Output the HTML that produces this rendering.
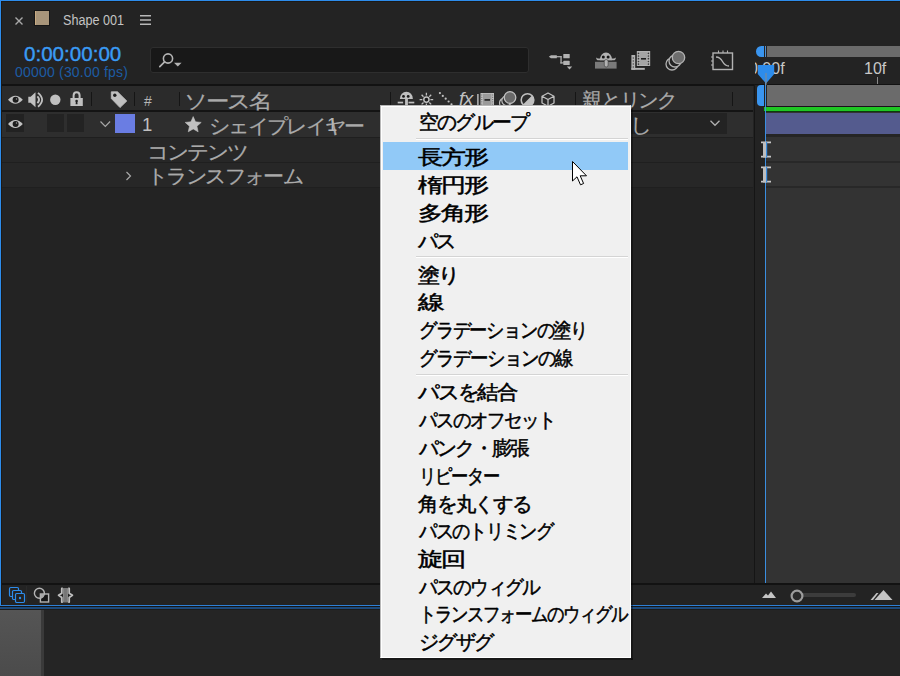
<!DOCTYPE html>
<html><head><meta charset="utf-8"><title>Shape 001</title>
<style>
*{margin:0;padding:0;box-sizing:border-box}
html,body{width:900px;height:676px;overflow:hidden;background:#232323;font-family:"Liberation Sans",sans-serif;position:relative}
.a{position:absolute;display:block}
.t{position:absolute;white-space:nowrap}
</style></head>
<body>
<div class="a" style="left:0px;top:0px;width:900px;height:609px;background:#232323;"></div>
<div class="a" style="left:0px;top:0px;width:900px;height:1px;background:#2d8ceb;"></div>
<div class="a" style="left:0px;top:0px;width:1px;height:607px;background:#2d8ceb;"></div>
<div class="a" style="left:1px;top:1px;width:899px;height:1px;background:#1b1917;"></div>
<div class="a" style="left:1px;top:1px;width:1px;height:606px;background:#1b1917;"></div>
<svg class="a" style="left:14px;top:16px;" width="10" height="10" viewBox="0 0 10 10"><path d="M1.5 1.5L8.5 8.5M8.5 1.5L1.5 8.5" stroke="#a9a9a9" stroke-width="1.4" fill="none"/></svg>
<div class="a" style="left:34px;top:10px;width:16px;height:16px;background:#161616;"></div>
<div class="a" style="left:35px;top:11px;width:14px;height:14px;background:#a8957a;"></div>
<div class="a" style="left:35px;top:11px;width:1px;height:14px;background:#c9ab82;"></div>
<div class="t" style="left:63px;top:13px;font-size:14px;line-height:14px;color:#c4c4c4;transform:scaleX(0.9);transform-origin:0 0">Shape 001</div>
<svg class="a" style="left:139px;top:14px;" width="13" height="12" viewBox="0 0 13 12"><path d="M1 1.75H12M1 6H12M1 10.25H12" stroke="#b8b8b8" stroke-width="1.5" fill="none"/></svg>
<div class="t" style="left:23.5px;top:43px;font-size:21px;line-height:21px;color:#3a9bf4;-webkit-text-stroke:0.4px #3a9bf4;transform:scaleX(0.98);transform-origin:0 0">0:00:00:00</div>
<div class="t" style="left:15px;top:65px;font-size:14px;line-height:14px;color:#1d5ca3;letter-spacing:0.2px">00000 (30.00 fps)</div>
<div class="a" style="left:150px;top:47.3px;width:379px;height:26px;background:#181818;border:1px solid #2e2e2e;border-radius:3px"></div>
<svg class="a" style="left:156px;top:50px;" width="30" height="20" viewBox="0 0 30 20"><circle cx="12" cy="8.5" r="4.6" stroke="#b4b4b4" stroke-width="1.6" fill="none"/><path d="M8.6 11.9L3.8 16.7" stroke="#b4b4b4" stroke-width="1.7" stroke-linecap="round"/><path d="M18 12.7H25.6L21.8 16.5Z" fill="#b4b4b4"/></svg>
<svg class="a" style="left:548px;top:52px;" width="26" height="20" viewBox="0 0 26 20"><path d="M0.8 4.7L3 3.2H8.8V6.2H3Z" fill="#b2b2b2"/><rect x="8" y="4.1" width="5.6" height="1.2" fill="#b2b2b2"/><rect x="12.4" y="4.1" width="1.3" height="7.4" fill="#b2b2b2"/><rect x="12.4" y="10.3" width="3.5" height="1.2" fill="#b2b2b2"/><rect x="15.3" y="2" width="6.4" height="4.3" rx="0.6" fill="#b2b2b2"/><rect x="15.3" y="8.8" width="6.4" height="4.2" rx="0.6" fill="#b2b2b2"/><path d="M18.8 14.6H24.2L21.5 17.6Z" fill="#b2b2b2"/></svg>
<svg class="a" style="left:594px;top:50px;" width="24" height="20" viewBox="0 0 24 20"><rect x="1" y="11.8" width="21.6" height="6.8" fill="#7a7a7a"/><path d="M5.8 10.2A6.2 7.8 0 0 1 18.2 10.2Z" fill="#b2b2b2"/><path d="M2.2 7.4Q2.2 10.3 4.6 10.3H19.4Q21.8 10.3 21.8 7.4L20.2 8.6H3.8Z" fill="#b2b2b2"/><circle cx="9.3" cy="7" r="1.5" fill="#151515"/><circle cx="14.1" cy="7" r="1.5" fill="#151515"/><rect x="10.3" y="9.5" width="3.8" height="7.5" rx="1.9" fill="#b2b2b2" stroke="#3a3a3a" stroke-width="0.6"/></svg>
<svg class="a" style="left:629px;top:49px;" width="24" height="23" viewBox="0 0 24 23"><rect x="2.4" y="6" width="3.8" height="14.8" fill="#b2b2b2"/><rect x="2.4" y="18.9" width="13.4" height="1.9" fill="#b2b2b2"/><circle cx="4.3" cy="9" r="0.7" fill="#444"/><circle cx="4.3" cy="12" r="0.7" fill="#444"/><circle cx="4.3" cy="15" r="0.7" fill="#444"/><circle cx="4.3" cy="18" r="0.7" fill="#444"/><rect x="7.3" y="1.5" width="14.4" height="16" fill="#1e1e1e"/><rect x="7.8" y="2" width="13.4" height="15" fill="#b2b2b2"/><rect x="11" y="3" width="7" height="13" fill="#a4a4a4"/><rect x="12" y="9" width="5" height="1.6" fill="#1e1e1e"/><circle cx="9.5" cy="4.3" r="0.85" fill="#3a3a3a"/><circle cx="9.5" cy="7" r="0.85" fill="#3a3a3a"/><circle cx="9.5" cy="9.7" r="0.85" fill="#3a3a3a"/><circle cx="9.5" cy="12.5" r="0.85" fill="#3a3a3a"/><circle cx="9.5" cy="15.1" r="0.85" fill="#3a3a3a"/><circle cx="19.4" cy="4.3" r="0.85" fill="#3a3a3a"/><circle cx="19.4" cy="7" r="0.85" fill="#3a3a3a"/><circle cx="19.4" cy="9.7" r="0.85" fill="#3a3a3a"/><circle cx="19.4" cy="12.5" r="0.85" fill="#3a3a3a"/><circle cx="19.4" cy="15.1" r="0.85" fill="#3a3a3a"/></svg>
<svg class="a" style="left:664px;top:49px;" width="25" height="23" viewBox="0 0 25 23"><circle cx="8" cy="15" r="6" fill="none" stroke="#b2b2b2" stroke-width="1.3"/><circle cx="11" cy="12" r="6" fill="#232323" stroke="#b2b2b2" stroke-width="1.3"/><circle cx="14.5" cy="8.5" r="6.2" fill="#6e6e6e" stroke="#b2b2b2" stroke-width="1.3"/></svg>
<svg class="a" style="left:709px;top:48px;" width="26" height="24" viewBox="0 0 26 24"><rect x="4" y="5" width="19.5" height="16.5" fill="none" stroke="#b2b2b2" stroke-width="1.4"/><path d="M7 9Q11 9 13.5 13.5Q16 18 20 18" fill="none" stroke="#b2b2b2" stroke-width="1.4"/><path d="M9.5 2.5V5M14 2.5V5M18.5 2.5V5M2 9H4M2 13H4M2 17H4" stroke="#b2b2b2" stroke-width="1.1"/></svg>
<div class="a" style="left:2px;top:84px;width:898px;height:2px;background:#121212;"></div>
<div class="a" style="left:2px;top:86px;width:751px;height:24px;background:#2b2b2b;"></div>
<div class="a" style="left:2px;top:110px;width:751px;height:2px;background:#141414;"></div>
<div class="a" style="left:2px;top:112px;width:751px;height:25px;background:#2e2e2e;"></div>
<div class="a" style="left:2px;top:137px;width:751px;height:1px;background:#1f1f1f;"></div>
<div class="a" style="left:2px;top:138px;width:751px;height:24px;background:#272727;"></div>
<div class="a" style="left:2px;top:162px;width:751px;height:1px;background:#1f1f1f;"></div>
<div class="a" style="left:2px;top:163px;width:751px;height:24px;background:#272727;"></div>
<div class="a" style="left:2px;top:187px;width:751px;height:1px;background:#1f1f1f;"></div>
<svg class="a" style="left:7px;top:92px;" width="18" height="16" viewBox="0 0 18 16"><path d="M1 7.8Q8.4 -0.2 15.8 7.8Q8.4 15.8 1 7.8Z" fill="#c0c0c0"/><circle cx="8.6" cy="7.8" r="3" fill="#1c1c1c"/><circle cx="9.5" cy="6.9" r="0.75" fill="#9a9a9a"/></svg>
<svg class="a" style="left:27px;top:91px;" width="19" height="18" viewBox="0 0 19 18"><path d="M1.3 5.8H3.6L8.5 1.3V16.3L3.6 11.8H1.3Z" fill="#c0c0c0"/><path d="M10.4 5.4Q13.6 8.8 10.4 12.2" stroke="#c0c0c0" stroke-width="1.9" fill="none"/><path d="M11 1.9Q19.2 8.8 11 15.7" stroke="#c0c0c0" stroke-width="1.8" fill="none"/></svg>
<svg class="a" style="left:49px;top:93px;" width="13" height="13" viewBox="0 0 13 13"><circle cx="6.3" cy="6.8" r="5.2" fill="#c0c0c0"/></svg>
<svg class="a" style="left:69px;top:90px;" width="16" height="17" viewBox="0 0 16 17"><path d="M4.6 8.5V5.6Q4.6 2.2 7.6 2.2Q10.6 2.2 10.6 5.6V8.5" stroke="#c0c0c0" stroke-width="2" fill="none"/><rect x="1.4" y="8" width="12.4" height="8" fill="#c0c0c0"/><circle cx="7.6" cy="11" r="1.3" fill="#1e1e1e"/><path d="M6.9 11.5H8.3L8.6 14.2H6.6Z" fill="#1e1e1e"/></svg>
<div class="a" style="left:91px;top:92px;width:1px;height:14px;background:#151515;"></div>
<div class="a" style="left:134px;top:92px;width:1px;height:14px;background:#151515;"></div>
<div class="a" style="left:179px;top:92px;width:1px;height:14px;background:#151515;"></div>
<svg class="a" style="left:109px;top:90px;" width="20" height="19" viewBox="0 0 20 19"><path d="M2.3 1.8H8.5L17.8 11L11 17.6L2.3 8.5Z" fill="#c0c0c0" stroke="#c0c0c0" stroke-width="0.8" stroke-linejoin="round"/><circle cx="5.8" cy="5.2" r="1.7" fill="#1e1e1e"/></svg>
<div class="t" style="left:144px;top:94px;font-size:14px;line-height:14px;color:#b5b5b5;">#</div>
<div class="t" style="left:184.26px;top:90.55px;font-size:20px;line-height:20px;letter-spacing:-1.59px;color:#aaaaaa;-webkit-text-stroke:0.2px #aaaaaa;transform:scaleX(1.171);transform-origin:0 0;">ソース名</div>
<div class="a" style="left:390px;top:92px;width:1px;height:14px;background:#151515;"></div>
<svg class="a" style="left:396px;top:90px;" width="20" height="18" viewBox="0 0 20 18"><path d="M3.9 9A6.5 7.3 0 0 1 16.9 9Z" fill="#c0c0c0"/><circle cx="7.5" cy="6.4" r="1.4" fill="#1a1a1a"/><circle cx="12.2" cy="6.4" r="1.4" fill="#1a1a1a"/><rect x="9.1" y="8.5" width="2.8" height="7.5" fill="#c0c0c0"/><rect x="1.7" y="11.7" width="5.4" height="1.7" fill="#c0c0c0"/><rect x="12.5" y="11.7" width="5.8" height="1.7" fill="#c0c0c0"/></svg>
<svg class="a" style="left:418px;top:91px;" width="17" height="17" viewBox="0 0 17 17"><circle cx="8.4" cy="8.6" r="2.6" fill="#1a1a1a" stroke="#c0c0c0" stroke-width="1.5"/><path d="M8.4 1.8V4.6M8.4 12.6V15.4M1.6 8.6H4.4M12.4 8.6H15.2M3.6 3.8L5.5 5.7M11.3 11.5L13.2 13.4M13.2 3.8L11.3 5.7M5.5 11.5L3.6 13.4" stroke="#c0c0c0" stroke-width="1.3"/></svg>
<svg class="a" style="left:438px;top:91px;" width="16" height="18" viewBox="0 0 16 18"><circle cx="1.9" cy="2.1" r="1.1" fill="#c0c0c0"/><circle cx="4.8" cy="4.9" r="1.1" fill="#c0c0c0"/><circle cx="7.7" cy="7.7" r="1.1" fill="#c0c0c0"/><circle cx="10.6" cy="10.5" r="1.1" fill="#c0c0c0"/><circle cx="13.5" cy="13.3" r="1.1" fill="#c0c0c0"/></svg>
<div class="t" style="left:459px;top:89px;font-size:19px;line-height:19px;font-style:italic;color:#c0c0c0;letter-spacing:-0.5px">fx</div>
<svg class="a" style="left:476px;top:91px;" width="20" height="17" viewBox="0 0 20 17"><rect x="1.2" y="3" width="1.4" height="13" fill="#c0c0c0"/><rect x="4.5" y="2" width="13.5" height="14" fill="#c0c0c0"/><rect x="7" y="2.8" width="8.5" height="12.4" fill="#9a9a9a"/><rect x="8.5" y="8" width="5.5" height="1.8" fill="#2b2b2b"/><path d="M5.8 3.5V15M16.7 3.5V15" stroke="#555" stroke-width="0.9" stroke-dasharray="1 1.3"/></svg>
<svg class="a" style="left:498px;top:90px;" width="20" height="19" viewBox="0 0 20 19"><circle cx="6.5" cy="13" r="5" fill="none" stroke="#c0c0c0" stroke-width="1.2"/><circle cx="8.8" cy="10.6" r="5" fill="#2b2b2b" stroke="#c0c0c0" stroke-width="1.2"/><circle cx="12" cy="7.5" r="5.8" fill="#6a6a6a" stroke="#c0c0c0" stroke-width="1.3"/></svg>
<svg class="a" style="left:519px;top:91px;" width="17" height="17" viewBox="0 0 17 17"><circle cx="8.5" cy="9" r="6.3" fill="none" stroke="#c0c0c0" stroke-width="1.6"/><path d="M13 4.5A6.3 6.3 0 0 1 4 13.5Z" fill="#c0c0c0"/></svg>
<svg class="a" style="left:540px;top:91px;" width="16" height="17" viewBox="0 0 16 17"><path d="M8 2L14 5.2V12L8 15.2L2 12V5.2Z M2 5.2L8 8.5L14 5.2 M8 8.5V15.2" fill="none" stroke="#c0c0c0" stroke-width="1.3" stroke-linejoin="round"/></svg>
<div class="a" style="left:575px;top:92px;width:1px;height:14px;background:#151515;"></div>
<div class="t" style="left:581.96px;top:89.55px;font-size:20px;line-height:20px;letter-spacing:-1.59px;color:#aaaaaa;-webkit-text-stroke:0.2px #aaaaaa;transform:scaleX(1.021);transform-origin:0 0;">親とリンク</div>
<div class="a" style="left:732px;top:92px;width:1px;height:14px;background:#151515;"></div>
<div class="a" style="left:6px;top:114px;width:18px;height:18px;background:#222222;"></div>
<svg class="a" style="left:7px;top:116.5px;" width="18" height="14" viewBox="0 0 18 14"><path d="M1 7Q8.4 -1 15.8 7Q8.4 15 1 7Z" fill="#c0c0c0"/><circle cx="8.6" cy="7" r="3" fill="#1c1c1c"/><circle cx="9.5" cy="6.1" r="0.75" fill="#9a9a9a"/></svg>
<div class="a" style="left:47px;top:114px;width:17px;height:18px;background:#232323;"></div>
<div class="a" style="left:67px;top:114px;width:17px;height:18px;background:#232323;"></div>
<svg class="a" style="left:99px;top:119px;" width="13" height="10" viewBox="0 0 13 10"><path d="M1.5 2.5L6.3 7.3L11.1 2.5" fill="none" stroke="#a8a8a8" stroke-width="1.2"/></svg>
<div class="a" style="left:115px;top:114px;width:19.5px;height:19px;background:#6a7de3;"></div>
<div class="t" style="left:142px;top:116px;font-size:18.5px;line-height:18.5px;color:#c0c0c0;">1</div>
<svg class="a" style="left:184px;top:116px;" width="19" height="18" viewBox="0 0 19 18"><path d="M9.20 0.60L11.49 5.84L17.19 6.40L12.91 10.21L14.14 15.80L9.20 12.90L4.26 15.80L5.49 10.21L1.21 6.40L6.91 5.84Z" fill="#c0c0c0" stroke="#c0c0c0" stroke-width="0.6" stroke-linejoin="round"/></svg>
<div class="t" style="left:208.90px;top:116.05px;font-size:20px;line-height:20px;letter-spacing:-1.59px;color:#aaaaaa;-webkit-text-stroke:0.2px #aaaaaa;transform:scaleX(1.049);transform-origin:0 0;">シェイプレイヤー</div>
<div class="t" style="left:327px;top:116px;font-size:18.5px;line-height:18.5px;color:#b4b4b4;">1</div>
<div class="a" style="left:590px;top:113px;width:137px;height:21px;background:#232323;"></div>
<div class="t" style="left:629.82px;top:114.55px;font-size:20px;line-height:20px;letter-spacing:-1.59px;color:#aaaaaa;-webkit-text-stroke:0.2px #aaaaaa;transform:scaleX(1.091);transform-origin:0 0;">し</div>
<svg class="a" style="left:708px;top:118px;" width="14" height="10" viewBox="0 0 14 10"><path d="M2.5 2.8L7 7.3L11.5 2.8" fill="none" stroke="#b0b0b0" stroke-width="1.3"/></svg>
<div class="t" style="left:146.53px;top:141.55px;font-size:20px;line-height:20px;letter-spacing:-1.59px;color:#aaaaaa;-webkit-text-stroke:0.2px #aaaaaa;transform:scaleX(1.083);transform-origin:0 0;">コンテンツ</div>
<svg class="a" style="left:123px;top:170px;" width="10" height="12" viewBox="0 0 10 12"><path d="M3.5 2L7.5 6L3.5 10" fill="none" stroke="#a8a8a8" stroke-width="1.2"/></svg>
<div class="t" style="left:146.59px;top:166.15px;font-size:20px;line-height:20px;letter-spacing:-1.59px;color:#aaaaaa;-webkit-text-stroke:0.2px #aaaaaa;transform:scaleX(1.053);transform-origin:0 0;">トランスフォーム</div>
<div class="a" style="left:753.6px;top:84px;width:1.3px;height:500px;background:#151515;"></div>
<div class="a" style="left:755px;top:37px;width:145px;height:546px;overflow:hidden">
<div class="a" style="left:0px;top:0px;width:145px;height:546px;background:#232323;"></div>
<div class="a" style="left:12px;top:9px;width:133px;height:11px;background:#6b6b6b;"></div>
<div class="a" style="left:0.7999999999999545px;top:9px;width:8.2px;height:10.7px;background:#3a95ef;border-radius:5.3px 0 0 5.3px"></div>
<div class="a" style="left:10.200000000000045px;top:9px;width:1.3px;height:10.7px;background:#4f8fd0;"></div>
<div class="t" style="left:-6px;top:23.5px;font-size:16px;line-height:16px;color:#c8c8c8">0:00f</div>
<div class="t" style="left:109px;top:23.5px;font-size:16px;line-height:16px;color:#c8c8c8">10f</div>
<div class="a" style="left:122px;top:40px;width:1px;height:7px;background:#8a8a8a;"></div>
<div class="a" style="left:0px;top:47px;width:145px;height:1px;background:#121212;"></div>
<div class="a" style="left:0px;top:49px;width:145px;height:19px;background:#232323;"></div>
<div class="a" style="left:12px;top:48px;width:133px;height:20.8px;background:#6b6b6b;"></div>
<div class="a" style="left:1.5px;top:48px;width:7px;height:20.8px;background:#3a95ef;border-radius:4px 0 0 4px"></div>
<div class="a" style="left:9px;top:68.8px;width:136px;height:1px;background:#1a101a;"></div>
<div class="a" style="left:9px;top:69.6px;width:136px;height:4.3px;background:#1fc724;"></div>
<div class="a" style="left:9px;top:73.9px;width:136px;height:1.5px;background:#0d3a10;"></div>
<div class="a" style="left:10px;top:75px;width:135px;height:471px;background:#333333;"></div>
<div class="a" style="left:10px;top:76px;width:135px;height:21px;background:#545b8e;"></div>
<div class="a" style="left:10px;top:97px;width:135px;height:3px;background:#252525;"></div>
<div class="a" style="left:10px;top:124px;width:135px;height:2px;background:#282828;"></div>
<div class="a" style="left:10px;top:149px;width:135px;height:2px;background:#282828;"></div>
<div class="a" style="left:9.899999999999977px;top:29px;width:1.3px;height:517px;background:#3a8ee0;"></div>
<svg class="a" style="left:2px;top:27px;" width="18" height="21" viewBox="0 0 18 21"><path d="M0.8 1H17.2V10L9 19.5L0.8 10Z" fill="#2d8ceb"/><rect x="8.5" y="9" width="1" height="12" fill="#8a8a8a"/></svg>
<svg class="a" style="left:5px;top:104px;" width="12" height="17" viewBox="0 0 12 17"><path d="M1 1.4H11M1 15.6H11" stroke="#c8c8c8" stroke-width="1.7" fill="none"/><rect x="3" y="1" width="3" height="15.5" fill="#bdbdbd"/><rect x="6" y="1" width="1.2" height="15.5" fill="#3a8ee0"/></svg>
<svg class="a" style="left:5px;top:129px;" width="12" height="17" viewBox="0 0 12 17"><path d="M1 1.4H11M1 15.6H11" stroke="#c8c8c8" stroke-width="1.7" fill="none"/><rect x="3" y="1" width="3" height="15.5" fill="#bdbdbd"/><rect x="6" y="1" width="1.2" height="15.5" fill="#3a8ee0"/></svg>
</div>
<div class="a" style="left:2px;top:583px;width:898px;height:2px;background:#121212;"></div>
<div class="a" style="left:2px;top:585px;width:898px;height:20px;background:#232323;"></div>
<div class="a" style="left:26px;top:586px;width:1px;height:17px;background:#2a2a2a;"></div>
<svg class="a" style="left:8px;top:586px;" width="20" height="19" viewBox="0 0 20 19"><rect x="1.5" y="1.5" width="9" height="9" rx="1.2" fill="none" stroke="#2d8ceb" stroke-width="1.2"/><rect x="4.5" y="4.5" width="9" height="9" rx="1.2" fill="#232323" stroke="#2d8ceb" stroke-width="1.2"/><rect x="7.5" y="7.5" width="9" height="9" rx="1.2" fill="#232323" stroke="#2d8ceb" stroke-width="1.2"/><circle cx="12" cy="12" r="1.2" fill="#2d8ceb"/></svg>
<svg class="a" style="left:32px;top:586px;" width="19" height="19" viewBox="0 0 19 19"><rect x="8.4" y="8" width="8.2" height="8" fill="#141414" stroke="#b4b4b4" stroke-width="1.4"/><circle cx="7.4" cy="7.2" r="5" fill="none" stroke="#b4b4b4" stroke-width="1.4"/><path d="M8.4 12.1A5 5 0 0 0 12.3 8H8.4Z" fill="#a8a8a8"/></svg>
<svg class="a" style="left:56px;top:586px;" width="19" height="19" viewBox="0 0 19 19"><rect x="7" y="2" width="5" height="14.5" fill="#767676"/><path d="M7.6 2.8V15.8M11.4 2.8V15.8" stroke="#8e8e8e" stroke-width="0.8"/><path d="M6.8 2.5H5.8V7.2L2.6 9.3L5.8 11.4V16H6.8M12.2 2.5H13.2V7.2L16.4 9.3L13.2 11.4V16H12.2" fill="none" stroke="#c0c0c0" stroke-width="1.8" stroke-linejoin="round"/></svg>
<svg class="a" style="left:761px;top:589px;" width="16" height="11" viewBox="0 0 16 11"><path d="M1 9L5 4.5L7 6.5L10 2.5L15 9Z" fill="#c4c4c4"/></svg>
<div class="a" style="left:800px;top:593px;width:56px;height:4px;background:#3c3c3c;border-radius:2px"></div>
<svg class="a" style="left:789px;top:588px;" width="16" height="16" viewBox="0 0 16 16"><circle cx="8" cy="8" r="5.4" fill="#2a2a2a" stroke="#9c9c9c" stroke-width="2.2"/></svg>
<svg class="a" style="left:869px;top:588px;" width="26" height="14" viewBox="0 0 26 14"><path d="M1.5 12L7.5 5H9.5L4 12Z" fill="#c4c4c4"/><path d="M5.5 12L14.5 2L23.5 12Z" fill="#c4c4c4"/></svg>
<div class="a" style="left:0px;top:605px;width:900px;height:1px;background:#2d7fd6;"></div>
<div class="a" style="left:0px;top:606px;width:900px;height:1px;background:#161616;"></div>
<div class="a" style="left:0px;top:607px;width:900px;height:2px;background:#1c4a7c;"></div>
<div class="a" style="left:0px;top:609px;width:900px;height:1px;background:#1d1a18;"></div>
<div class="a" style="left:0px;top:610px;width:900px;height:66px;background:#252525;"></div>
<div class="a" style="left:0px;top:610px;width:41px;height:66px;background:#4e4e4e;background:linear-gradient(#555,#4b4b4b)"></div>
<div class="a" style="left:41px;top:610px;width:3px;height:66px;background:#3a3a3a;"></div>
<div class="a" style="left:631px;top:107px;width:2px;height:553px;background:rgba(0,0,0,0.35);"></div>
<div class="a" style="left:382px;top:658px;width:251px;height:2px;background:rgba(0,0,0,0.35);"></div>
<div class="a" style="left:380px;top:105px;width:251px;height:553px;background:#f0f0f0;border:1px solid #b8b8b8;border-right-color:#ffffff;border-bottom-color:#ffffff;box-shadow:inset 1px 1px 0 #ffffff"></div>
<div class="a" style="left:383px;top:142px;width:245px;height:28px;background:#91c9f7;"></div>
<div class="a" style="left:416px;top:138px;width:212px;height:1px;background:#d4d4d4;"></div>
<div class="a" style="left:416px;top:139px;width:212px;height:1px;background:#ffffff;"></div>
<div class="a" style="left:416px;top:256px;width:212px;height:1px;background:#d4d4d4;"></div>
<div class="a" style="left:416px;top:257px;width:212px;height:1px;background:#ffffff;"></div>
<div class="a" style="left:416px;top:374px;width:212px;height:1px;background:#d4d4d4;"></div>
<div class="a" style="left:416px;top:375px;width:212px;height:1px;background:#ffffff;"></div>
<div class="t" style="left:418.52px;top:112.35px;font-size:20px;line-height:20px;letter-spacing:-1.59px;color:#000000;-webkit-text-stroke:0.5px #000000;transform:scaleX(0.990);transform-origin:0 0;">空のグループ</div>
<div class="t" style="left:418.00px;top:146.95px;font-size:20px;line-height:20px;letter-spacing:-1.59px;color:#000000;-webkit-text-stroke:0.5px #000000;transform:scaleX(1.250);transform-origin:0 0;">長方形</div>
<div class="t" style="left:418.00px;top:174.55px;font-size:20px;line-height:20px;letter-spacing:-1.59px;color:#000000;-webkit-text-stroke:0.5px #000000;transform:scaleX(1.250);transform-origin:0 0;">楕円形</div>
<div class="t" style="left:418.00px;top:203.05px;font-size:20px;line-height:20px;letter-spacing:-1.59px;color:#000000;-webkit-text-stroke:0.5px #000000;transform:scaleX(1.250);transform-origin:0 0;">多角形</div>
<div class="t" style="left:418.49px;top:231.15px;font-size:20px;line-height:20px;letter-spacing:-1.59px;color:#000000;-webkit-text-stroke:0.5px #000000;transform:scaleX(1.003);transform-origin:0 0;">パス</div>
<div class="t" style="left:418.31px;top:264.55px;font-size:20px;line-height:20px;letter-spacing:-1.59px;color:#000000;-webkit-text-stroke:0.5px #000000;transform:scaleX(1.094);transform-origin:0 0;">塗り</div>
<div class="t" style="left:417.83px;top:292.45px;font-size:20px;line-height:20px;letter-spacing:-1.59px;color:#000000;-webkit-text-stroke:0.5px #000000;transform:scaleX(1.336);transform-origin:0 0;">線</div>
<div class="t" style="left:418.68px;top:320.35px;font-size:20px;line-height:20px;letter-spacing:-1.59px;color:#000000;-webkit-text-stroke:0.5px #000000;transform:scaleX(0.912);transform-origin:0 0;">グラデーションの塗り</div>
<div class="t" style="left:418.66px;top:347.95px;font-size:20px;line-height:20px;letter-spacing:-1.59px;color:#000000;-webkit-text-stroke:0.5px #000000;transform:scaleX(0.921);transform-origin:0 0;">グラデーションの線</div>
<div class="t" style="left:418.35px;top:382.45px;font-size:20px;line-height:20px;letter-spacing:-1.59px;color:#000000;-webkit-text-stroke:0.5px #000000;transform:scaleX(1.073);transform-origin:0 0;">パスを結合</div>
<div class="t" style="left:418.66px;top:410.25px;font-size:20px;line-height:20px;letter-spacing:-1.59px;color:#000000;-webkit-text-stroke:0.5px #000000;transform:scaleX(0.920);transform-origin:0 0;">パスのオフセット</div>
<div class="t" style="left:418.52px;top:438.35px;font-size:20px;line-height:20px;letter-spacing:-1.59px;color:#000000;-webkit-text-stroke:0.5px #000000;transform:scaleX(0.988);transform-origin:0 0;">パンク・膨張</div>
<div class="t" style="left:418.77px;top:465.85px;font-size:20px;line-height:20px;letter-spacing:-1.59px;color:#000000;-webkit-text-stroke:0.5px #000000;transform:scaleX(0.863);transform-origin:0 0;">リピーター</div>
<div class="t" style="left:418.46px;top:493.65px;font-size:20px;line-height:20px;letter-spacing:-1.59px;color:#000000;-webkit-text-stroke:0.5px #000000;transform:scaleX(1.022);transform-origin:0 0;">角を丸くする</div>
<div class="t" style="left:418.68px;top:521.35px;font-size:20px;line-height:20px;letter-spacing:-1.59px;color:#000000;-webkit-text-stroke:0.5px #000000;transform:scaleX(0.908);transform-origin:0 0;">パスのトリミング</div>
<div class="t" style="left:417.97px;top:549.25px;font-size:20px;line-height:20px;letter-spacing:-1.59px;color:#000000;-webkit-text-stroke:0.5px #000000;transform:scaleX(1.266);transform-origin:0 0;">旋回</div>
<div class="t" style="left:418.64px;top:577.35px;font-size:20px;line-height:20px;letter-spacing:-1.59px;color:#000000;-webkit-text-stroke:0.5px #000000;transform:scaleX(0.931);transform-origin:0 0;">パスのウィグル</div>
<div class="t" style="left:418.76px;top:604.45px;font-size:20px;line-height:20px;letter-spacing:-1.59px;color:#000000;-webkit-text-stroke:0.5px #000000;transform:scaleX(0.869);transform-origin:0 0;">トランスフォームのウィグル</div>
<div class="t" style="left:418.50px;top:632.05px;font-size:20px;line-height:20px;letter-spacing:-1.59px;color:#000000;-webkit-text-stroke:0.5px #000000;transform:scaleX(1.001);transform-origin:0 0;">ジグザグ</div>
<svg class="a" style="left:571px;top:160px;" width="20" height="27" viewBox="0 0 20 27"><path d="M1.5 1.5V21L6 16.8L9.5 24.8L12.6 23.5L9.2 15.8H15.5Z" fill="#ffffff" stroke="#000000" stroke-width="1" stroke-linejoin="miter"/></svg>
</body></html>
